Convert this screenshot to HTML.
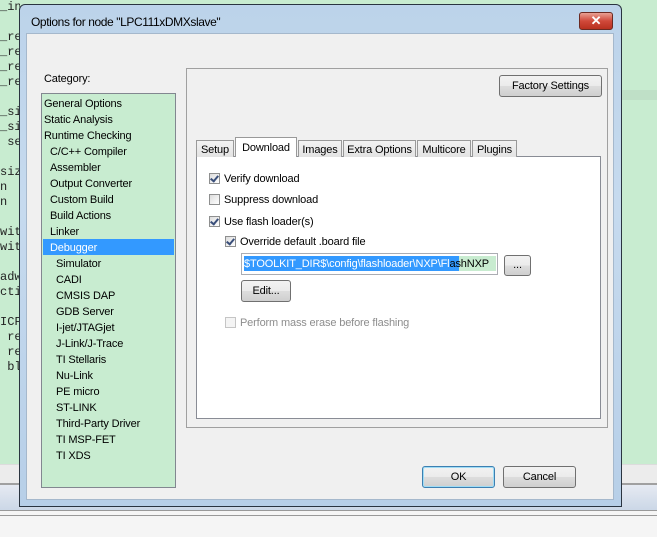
<!DOCTYPE html>
<html><head><meta charset="utf-8"><style>
body{margin:0;width:657px;height:536px;overflow:hidden;background:#c8ecd0;font-family:"Liberation Sans",sans-serif;font-size:11px;letter-spacing:-0.15px;position:relative}
.a{position:absolute;white-space:nowrap}
.code{font-family:"Liberation Mono",monospace;font-size:12px;letter-spacing:0;color:#222;line-height:15px}
.btn{position:absolute;border:1px solid #707070;border-radius:3px;background:linear-gradient(#f2f2f2,#ebebeb 50%,#dddddd 51%,#cfcfcf);text-align:center;box-sizing:border-box;color:#000;white-space:nowrap}
.cb{position:absolute;width:11px;height:11px;border:1px solid #8e8f8f;background:linear-gradient(135deg,#dcdcdc,#fff);box-sizing:border-box}
.cb.on::after{content:"";position:absolute;left:2px;top:0px;width:3px;height:6px;border:solid #3a4f7a;border-width:0 2px 2px 0;transform:rotate(40deg)}
.tab{position:absolute;top:140px;height:17px;border:1px solid #999;border-bottom:none;background:linear-gradient(#f3f3f3,#e3e3e3);box-sizing:border-box;text-align:center;line-height:18px;white-space:nowrap;overflow:hidden}
.li{position:absolute;line-height:16px;white-space:nowrap}
</style></head><body>
<div class="a code" style="left:0;top:0;width:20px;overflow:hidden">
<div>_in</div><div>&nbsp;</div><div>_re</div><div>_re</div><div>_re</div><div>_re</div><div>&nbsp;</div><div>_si</div><div>_si</div><div>&nbsp;se</div><div>&nbsp;</div><div>siz</div><div>n</div><div>n</div><div>&nbsp;</div><div>wit</div><div>wit</div><div>&nbsp;</div><div>adw</div><div>cti</div><div>&nbsp;</div><div>ICF</div><div>&nbsp;re</div><div>&nbsp;re</div><div>&nbsp;bl</div>
</div>
<div class="a" style="left:0;top:464px;width:657px;height:19px;background:#ececec;border-top:1px solid #dcdcdc"></div>
<div class="a" style="left:0;top:483px;width:657px;height:27px;background:linear-gradient(#e6eaf2,#c9d6e6);border-top:2px solid #a0a0a0"></div>
<div class="a" style="left:0;top:510px;width:657px;height:26px;background:#f5f5f5;border-top:1px solid #999"></div>
<div class="a" style="left:0;top:515px;width:657px;height:1px;background:#999"></div>
<div class="a" style="left:622px;top:90px;width:35px;height:10px;background:#bfe0c7"></div>
<!-- dialog -->
<div class="a" style="left:19px;top:4px;width:603px;height:503px;background:linear-gradient(#bcd3ea,#c6daee 40%,#b7cfe8);border:1px solid #2a3440;border-radius:6px 6px 0 0;box-sizing:border-box"></div>
<div class="a" style="left:31px;top:15px;font-size:12px;letter-spacing:-0.4px;color:#000">Options for node "LPC111xDMXslave"</div>
<div class="a" style="left:579px;top:12px;width:34px;height:18px;border:1px solid #6b2a22;border-radius:3px;background:linear-gradient(#e8a093,#d0493a 50%,#b8301f);box-sizing:border-box;color:#fff;font-weight:bold;text-align:center;line-height:16px;font-size:13px">✕</div>
<div class="a" style="left:26px;top:33px;width:588px;height:467px;background:#f0f0f0;border:1px solid #a5b8cc;box-sizing:border-box"></div>
<div class="a" style="left:44px;top:73px">Category:</div>
<div class="a" style="left:41px;top:93px;width:135px;height:395px;background:#c8ecd0;border:1px solid #828790;box-sizing:border-box"></div>
<div class="a" style="left:43px;top:239px;width:131px;height:16px;background:#3399ff"></div>
<div class="li" style="left:44px;top:96px">General Options</div>
<div class="li" style="left:44px;top:112px">Static Analysis</div>
<div class="li" style="left:44px;top:128px">Runtime Checking</div>
<div class="li" style="left:50px;top:144px">C/C++ Compiler</div>
<div class="li" style="left:50px;top:160px">Assembler</div>
<div class="li" style="left:50px;top:176px">Output Converter</div>
<div class="li" style="left:50px;top:192px">Custom Build</div>
<div class="li" style="left:50px;top:208px">Build Actions</div>
<div class="li" style="left:50px;top:224px">Linker</div>
<div class="li" style="left:50px;top:240px;color:#fff">Debugger</div>
<div class="li" style="left:56px;top:256px">Simulator</div>
<div class="li" style="left:56px;top:272px">CADI</div>
<div class="li" style="left:56px;top:288px">CMSIS DAP</div>
<div class="li" style="left:56px;top:304px">GDB Server</div>
<div class="li" style="left:56px;top:320px">I-jet/JTAGjet</div>
<div class="li" style="left:56px;top:336px">J-Link/J-Trace</div>
<div class="li" style="left:56px;top:352px">TI Stellaris</div>
<div class="li" style="left:56px;top:368px">Nu-Link</div>
<div class="li" style="left:56px;top:384px">PE micro</div>
<div class="li" style="left:56px;top:400px">ST-LINK</div>
<div class="li" style="left:56px;top:416px">Third-Party Driver</div>
<div class="li" style="left:56px;top:432px">TI MSP-FET</div>
<div class="li" style="left:56px;top:448px">TI XDS</div>
<!-- right panel -->
<div class="a" style="left:186px;top:68px;width:422px;height:360px;border:1px solid #a0a0a0;box-sizing:border-box"></div>
<div class="btn" style="left:499px;top:75px;width:103px;height:22px;line-height:21px">Factory Settings</div>
<div class="a" style="left:196px;top:156px;width:405px;height:263px;background:#fff;border:1px solid #898c95;box-sizing:border-box"></div>
<div class="tab" style="left:196px;width:38px">Setup</div>
<div class="tab" style="left:235px;top:137px;height:20px;width:62px;background:#fff;line-height:20px">Download</div>
<div class="tab" style="left:298px;width:44px">Images</div>
<div class="tab" style="left:343px;width:73px">Extra Options</div>
<div class="tab" style="left:417px;width:54px">Multicore</div>
<div class="tab" style="left:472px;width:45px">Plugins</div>
<div class="cb on" style="left:209px;top:173px"></div><div class="a" style="left:224px;top:173px">Verify download</div>
<div class="cb" style="left:209px;top:194px"></div><div class="a" style="left:224px;top:194px">Suppress download</div>
<div class="cb on" style="left:209px;top:216px"></div><div class="a" style="left:224px;top:216px">Use flash loader(s)</div>
<div class="cb on" style="left:225px;top:236px"></div><div class="a" style="left:240px;top:236px">Override default .board file</div>
<div class="a" style="left:241px;top:253px;width:257px;height:22px;border:1px solid #abadb3;box-sizing:border-box;background:#fff"></div>
<div class="a" style="left:244px;top:256px;height:15px;width:215px;background:#3399ff"></div>
<div class="a" style="left:459px;top:256px;height:15px;width:37px;background:#c8ecd0"></div>
<div class="a" style="left:244px;top:257px;line-height:15px;width:252px;overflow:hidden"><span style="color:#fff">$TOOLKIT_DIR$\config\flashloader\NXP\Fl</span>ashNXP</div>
<div class="btn" style="left:504px;top:255px;width:27px;height:21px;line-height:19px">...</div>
<div class="btn" style="left:241px;top:280px;width:50px;height:22px;line-height:21px">Edit...</div>
<div class="cb" style="left:225px;top:317px;border-color:#c5c5c5;background:#f4f4f4"></div><div class="a" style="left:240px;top:317px;color:#8d8d8d">Perform mass erase before flashing</div>
<div class="btn" style="left:422px;top:466px;width:73px;height:22px;line-height:21px;border-color:#3c7fb1;box-shadow:inset 0 0 0 1px #9fdcf5">OK</div>
<div class="btn" style="left:503px;top:466px;width:73px;height:22px;line-height:21px">Cancel</div>
</body></html>
